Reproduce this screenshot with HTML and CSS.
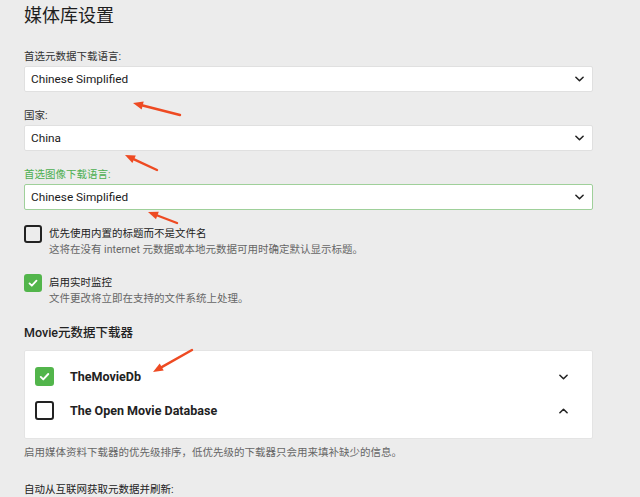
FILE: index.html
```html
<!DOCTYPE html>
<html>
<head>
<meta charset="utf-8">
<title>媒体库设置</title>
<link rel="stylesheet" href="styles.css">
</head>
<body>
<div class="page">
  <h1 class="title">媒体库设置</h1>

  <div class="field">
    <div class="label">首选元数据下载语言:</div>
    <div class="select">
      <span>Chinese Simplified</span>
      <svg class="chev" viewBox="0 0 10 6" width="9" height="6"><path d="M1 1l4 4 4-4" /></svg>
    </div>
  </div>

  <div class="field">
    <div class="label">国家:</div>
    <div class="select">
      <span>China</span>
      <svg class="chev" viewBox="0 0 10 6" width="9" height="6"><path d="M1 1l4 4 4-4" /></svg>
    </div>
  </div>

  <div class="field">
    <div class="label green">首选图像下载语言:</div>
    <div class="select focus">
      <span>Chinese Simplified</span>
      <svg class="chev" viewBox="0 0 10 6" width="9" height="6"><path d="M1 1l4 4 4-4" /></svg>
    </div>
  </div>

  <div class="check">
    <div class="box"></div>
    <div>
      <div class="check-text">优先使用内置的标题而不是文件名</div>
      <div class="desc">这将在没有 internet 元数据或本地元数据可用时确定默认显示标题。</div>
    </div>
  </div>

  <div class="check">
    <div class="box on">
      <svg viewBox="0 0 18 18" width="18" height="18"><path d="M4.5 9.5l3 3 6-6.5" /></svg>
    </div>
    <div>
      <div class="check-text">启用实时监控</div>
      <div class="desc">文件更改将立即在支持的文件系统上处理。</div>
    </div>
  </div>

  <h2 class="heading">Movie元数据下载器</h2>
  <div class="list">
    <div class="row">
      <div class="box big on">
        <svg viewBox="0 0 18 18" width="19" height="19"><path d="M4.5 9.5l3 3 6-6.5" /></svg>
      </div>
      <span class="row-name">TheMovieDb</span>
      <svg class="chev" viewBox="0 0 10 6" width="9" height="6"><path d="M1 1l4 4 4-4" /></svg>
    </div>
    <div class="row">
      <div class="box big"></div>
      <span class="row-name">The Open Movie Database</span>
      <svg class="chev" viewBox="0 0 10 6" width="9" height="6"><path d="M1 5l4-4 4 4" /></svg>
    </div>
  </div>
  <div class="help">启用媒体资料下载器的优先级排序，低优先级的下载器只会用来填补缺少的信息。</div>

  <div class="label last">自动从互联网获取元数据并刷新:</div>
</div>

<svg class="arrows" viewBox="0 0 640 497" width="640" height="497">
  <line x1="180" y1="115" x2="142.7" y2="105.5" />
  <polygon points="133,103 143.7,101.6 141.7,109.4" />
  <line x1="157" y1="170" x2="134.1" y2="159.3" />
  <polygon points="125,155 135.8,155.6 132.4,162.9" />
  <line x1="177" y1="223" x2="157.4" y2="215.5" />
  <polygon points="148,212 158.8,211.8 156,219.2" />
  <line x1="192" y1="350" x2="161.7" y2="367.1" />
  <polygon points="153,372 163.7,370.6 159.7,363.6" />
</svg>
</body>
</html>
```

FILE: styles.css
```css
body { margin:0; background:#ececec; color:#222; font-family:Roboto, "Noto Sans CJK SC", sans-serif; overflow:hidden; }
.page { padding:0 47px 0 24px; }

.title { margin:0; padding-top:3px; font-size:18px; line-height:26px; font-weight:400; color:#1e1e1e; }

.field { margin-top:20px; }
.field + .field { margin-top:16px; }
.label { font-size:10.5px; line-height:16px; color:#333; }
.label.green { color:#4caf50; }
.select { height:24px; margin-top:1px; background:#fff; border:1px solid #e0e0e0; border-radius:2px; display:flex; align-items:center; padding:0 8px 0 6px; font-size:11.8px; color:#1a1a1a; }
.select span { flex:1; }
.select.focus { border-color:#9fd09a; }

.chev { fill:none; stroke:#222; stroke-width:1.7; stroke-linecap:round; stroke-linejoin:round; }

.check { display:flex; gap:7px; margin-top:15px; }
.check + .check { margin-top:17px; }
.box { width:14px; height:14px; border:2px solid #222; border-radius:3px; flex-shrink:0; display:flex; align-items:center; justify-content:center; }
.box.on { background:#52b54b; border-color:#52b54b; }
.box svg { fill:none; stroke:#fff; stroke-width:2.3; stroke-linecap:round; stroke-linejoin:round; }
.check-text { font-size:10.5px; line-height:18px; color:#222; }
.desc { font-size:10.5px; line-height:14px; color:#666; }

.heading { margin:19px 0 0; font-size:12.5px; line-height:16px; font-weight:500; color:#222; }
.list { margin-top:9px; background:#fff; border:1px solid #e4e4e4; border-radius:2px; padding:16px 0 18px 10px; }
.row { display:flex; align-items:center; height:19px; padding-right:24px; }
.row + .row { margin-top:15px; }
.box.big { width:15px; height:15px; }
.row-name { flex:1; margin-left:16px; font-size:12.5px; font-weight:700; color:#222; }
.help { margin-top:6px; font-size:10.5px; line-height:16px; color:#666; }
.label.last { margin-top:21px; color:#222; }

.arrows { position:absolute; left:0; top:0; pointer-events:none; }
.arrows line { stroke:#ee4a22; stroke-width:2.4; stroke-linecap:round; }
.arrows polygon { fill:#ee4a22; }
```
